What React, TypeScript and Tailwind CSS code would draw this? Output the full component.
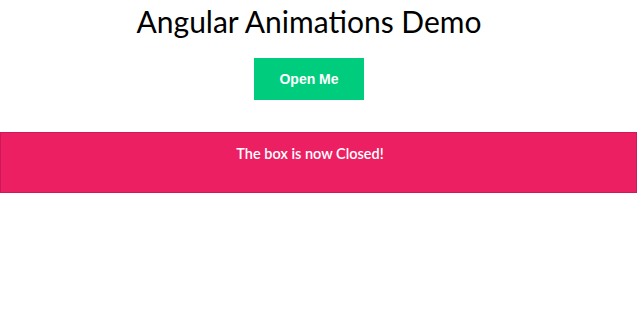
export default function App() {
  return (
    <div className="w-[640px] h-[323px] bg-white overflow-hidden font-['Lato','Open_Sans',sans-serif]">
      <div className="w-[618px] flex flex-col items-center pt-[4px]">
        <h1 className="text-[30px] leading-[34px] text-black font-normal">Angular Animations Demo</h1>
        <button className="mt-[20px] w-[110px] h-[42px] bg-[#00cc7e] text-white text-[14px] font-['Liberation_Sans',Arial,sans-serif] font-bold">
          Open Me
        </button>
      </div>
      <div className="mt-[32px] w-[637px] h-[61px] bg-[#ec1f63] border border-[#cf1857] pt-[11px]">
        <p className="w-[618px] text-center text-white text-[14.5px] leading-[20px] font-semibold">The box is now Closed!</p>
      </div>
    </div>
  );
}
